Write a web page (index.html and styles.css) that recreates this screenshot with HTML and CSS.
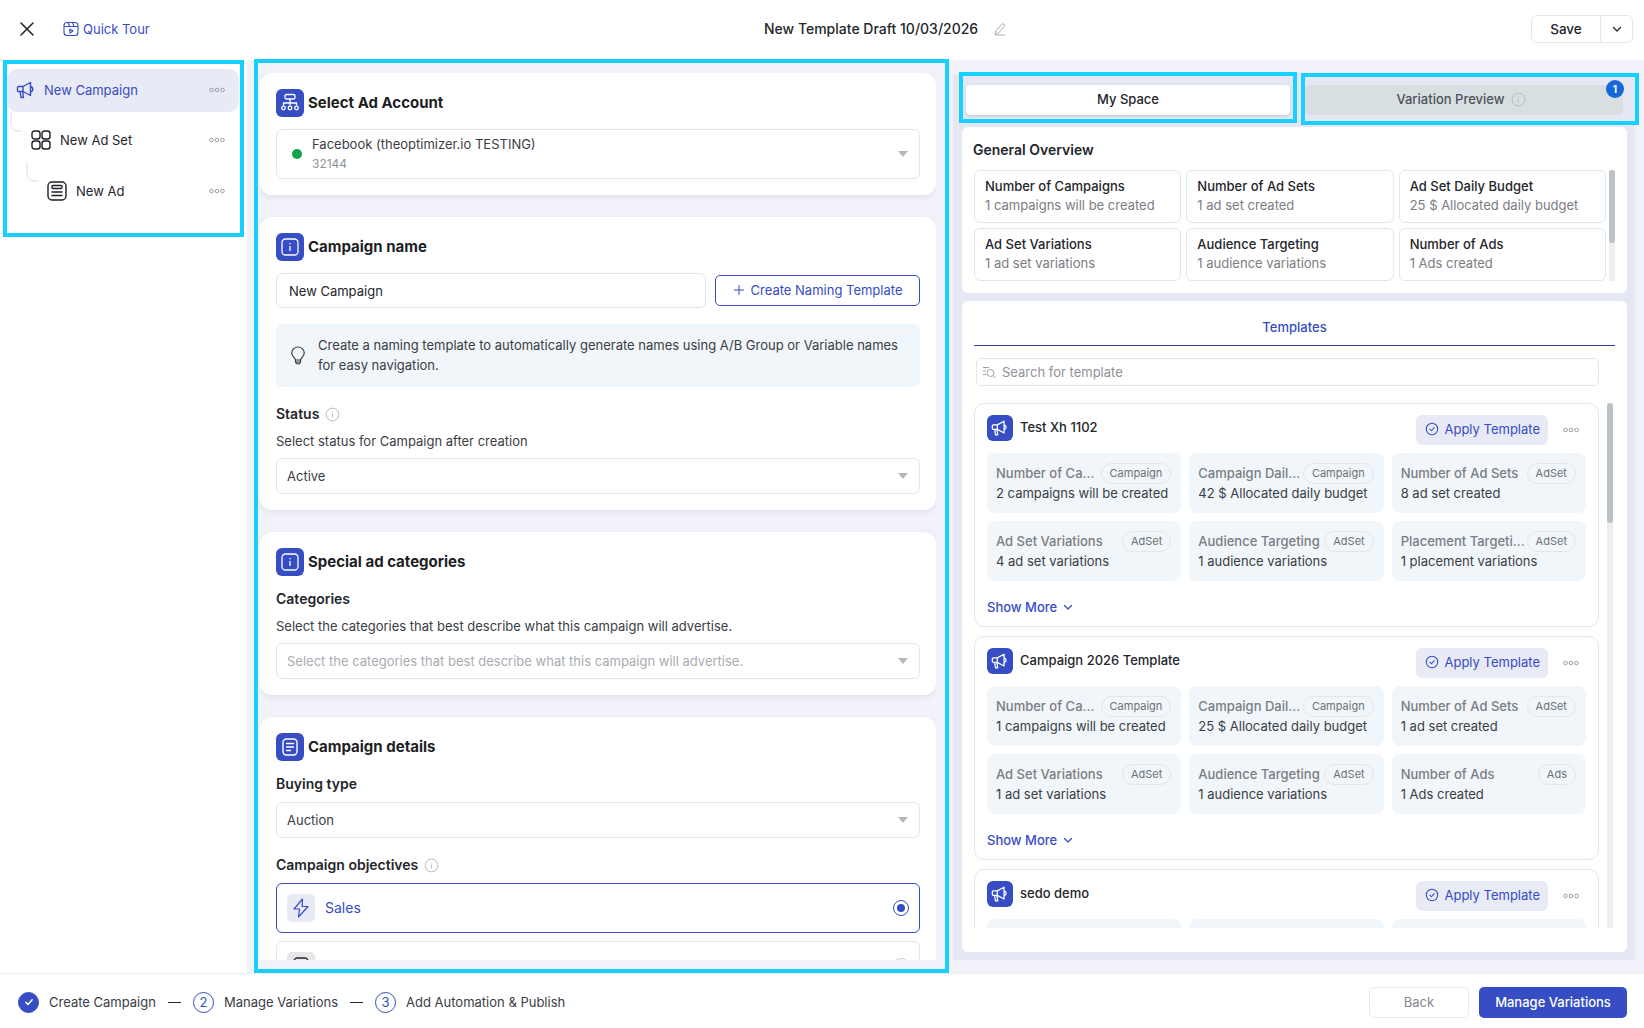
FILE: index.html
```html
<!DOCTYPE html>
<html lang="en">
<head>
<meta charset="utf-8">
<title>New Template Draft</title>
<link rel="stylesheet" href="styles.css">
</head>
<body>
<svg class="defs" width="0" height="0">
	<symbol id="i-mega" viewBox="0 0 20 20"><path d="M2.500 6.500H7L14.500 2.500v13L7 11.500H2.500a1 1 0 0 1-1-1v-3a1 1 0 0 1 1-1zM7 6.500v5M4 11.500l1 6h2.500l-1-6M14.500 6.500a2.800 2.800 0 0 1 0 5.500" fill="none" stroke="currentColor" stroke-width="1.400" stroke-linejoin="round" stroke-linecap="round"/></symbol>
	<symbol id="i-dots" viewBox="0 0 16 6"><g fill="none" stroke="currentColor" stroke-width="1"><circle cx="2.500" cy="3" r="1.800"/><circle cx="8" cy="3" r="1.800"/><circle cx="13.500" cy="3" r="1.800"/></g></symbol>
	<symbol id="i-check" viewBox="0 0 16 16"><circle cx="8" cy="8" r="6.500" fill="none" stroke="currentColor" stroke-width="1.200"/><path d="M5.500 8.200l1.800 1.800 3.200-3.600" fill="none" stroke="currentColor" stroke-width="1.200" stroke-linecap="round" stroke-linejoin="round"/></symbol>
	<symbol id="i-chev" viewBox="0 0 12 12"><path d="M2.500 4.500L6 8l3.500-3.500" fill="none" stroke="currentColor" stroke-width="1.300" stroke-linecap="round" stroke-linejoin="round"/></symbol>
	<symbol id="i-info" viewBox="0 0 16 16"><circle cx="8" cy="8" r="6.800" fill="none" stroke="currentColor"/><path d="M8 7.200v4M8 4.800v.8" stroke="currentColor" fill="none"/></symbol>
	<symbol id="i-infobox" viewBox="0 0 20 20"><rect x="2" y="2" width="16" height="16" rx="3.500" fill="none" stroke="currentColor" stroke-width="1.300"/><path d="M10 9v5M10 6v1.200" stroke="currentColor" stroke-width="1.300" fill="none"/></symbol>
	<symbol id="i-doc" viewBox="0 0 20 20"><rect x="3" y="2" width="14" height="16" rx="3.500" fill="none" stroke="currentColor" stroke-width="1.400"/><path d="M6.500 6.500h7M6.500 10h7M6.500 13.500h4" stroke="currentColor" stroke-width="1.400" stroke-linecap="round" fill="none"/></symbol>
</svg>

<div class="page">
	<header class="topbar">
		<div class="topbar-left">
			<svg class="close-icon" width="16" height="16" viewBox="0 0 16 16"><path d="M2 2l12 12M14 2L2 14" stroke="#1d1f24" stroke-width="1.500" stroke-linecap="round"/></svg>
			<a class="tour">
				<svg width="16" height="16" viewBox="0 0 16 16" fill="none" stroke="currentColor" stroke-width="1.100"><rect x="1" y="1.500" width="14" height="13" rx="3"/><path d="M1 5.500h14M5 1.500l1.500 4M9.500 1.500l1.500 4"/><path d="M6.800 8v4l3.200-2z" stroke-linejoin="round"/></svg>
				Quick Tour
			</a>
		</div>
		<div class="draft-title">
			New Template Draft 10/03/2026
			<svg width="14" height="14" viewBox="0 0 14 14" fill="none" stroke="#a9acb2"><path d="M9.500 1.500l2.500 2-6.500 7.500-3.500 1.500.8-3.500zM2 13h10"/></svg>
		</div>
		<div class="save-group">
			<span class="save-main">Save</span>
			<span class="save-arrow"><svg width="12" height="12"><use href="#i-chev"/></svg></span>
		</div>
	</header>

	<main class="workspace">
		<nav class="tree">
			<div class="tree-row tree-row-active">
				<svg class="tree-icon" width="20" height="20"><use href="#i-mega"/></svg>
				<span class="tree-name">New Campaign</span>
				<svg class="dots" width="16" height="6"><use href="#i-dots"/></svg>
			</div>
			<div class="tree-row tree-row-set">
				<span class="elbow"></span>
				<svg class="tree-icon" width="20" height="20" viewBox="0 0 20 20" fill="none" stroke="#1d1f24" stroke-width="1.400"><rect x="1" y="1" width="8" height="8" rx="2.500"/><rect x="11" y="1" width="8" height="8" rx="2.500"/><rect x="1" y="11" width="8" height="8" rx="2.500"/><rect x="11" y="11" width="8" height="8" rx="2.500"/></svg>
				<span class="tree-name">New Ad Set</span>
				<svg class="dots" width="16" height="6"><use href="#i-dots"/></svg>
			</div>
			<div class="tree-row tree-row-ad">
				<span class="elbow"></span>
				<svg class="tree-icon" width="20" height="20" viewBox="0 0 20 20" fill="none" stroke="#1d1f24" stroke-width="1.400"><rect x="1" y="1" width="18" height="18" rx="4"/><rect x="5" y="4.500" width="10" height="3" rx="1"/><path d="M4.500 11h11M4.500 14.500h11"/></svg>
				<span class="tree-name">New Ad</span>
				<svg class="dots" width="16" height="6"><use href="#i-dots"/></svg>
			</div>
		</nav>

		<section class="form-col">
			<div class="form-scroll">
				<div class="card card-account">
					<h2 class="card-title">
						<span class="title-icon"><svg width="20" height="20" viewBox="0 0 20 20" fill="none" stroke="currentColor" stroke-width="1.300"><rect x="5" y="1.500" width="10" height="4.500" rx="1.500"/><path d="M10 6v6M3.500 12.500v-2.500h13v2.500M10 10v2.500"/><circle cx="3.500" cy="15" r="1.800"/><circle cx="10" cy="15" r="1.800"/><circle cx="16.500" cy="15" r="1.800"/></svg></span>
						Select Ad Account
					</h2>
					<div class="account-select">
						<span class="status-dot"></span>
						<div class="account-text">
							<div class="account-name">Facebook (theoptimizer.io TESTING)</div>
							<div class="account-id">32144</div>
						</div>
						<span class="caret"></span>
					</div>
				</div>

				<div class="card card-name">
					<h2 class="card-title">
						<span class="title-icon"><svg width="20" height="20"><use href="#i-infobox"/></svg></span>
						Campaign name
					</h2>
					<div class="name-row">
						<div class="text-input">New Campaign</div>
						<a class="outline-btn">
							<svg width="12" height="12" viewBox="0 0 12 12"><path d="M6 1v10M1 6h10" stroke="currentColor" fill="none"/></svg>
							Create Naming Template
						</a>
					</div>
					<div class="tip">
						<svg width="16" height="20" viewBox="0 0 16 20" fill="none" stroke="#3a3d44" stroke-width="1.200"><path d="M5.500 14c0-2-3.800-3.500-3.800-7.300A6.300 6.300 0 0 1 8 1a6.300 6.300 0 0 1 6.300 5.700c0 3.800-3.800 5.300-3.800 7.300z"/><path d="M5.500 14v1.500c0 .8 1 2.500 2.500 2.500s2.500-1.700 2.500-2.500V14M6 16h4"/></svg>
						<p>Create a naming template to automatically generate names using A/B Group or Variable names for easy navigation.</p>
					</div>
					<div class="field-label label-status">Status <svg class="info" width="15" height="15"><use href="#i-info"/></svg></div>
					<div class="field-hint">Select status for Campaign after creation</div>
					<div class="select">Active<span class="caret"></span></div>
				</div>

				<div class="card card-special">
					<h2 class="card-title">
						<span class="title-icon"><svg width="20" height="20"><use href="#i-infobox"/></svg></span>
						Special ad categories
					</h2>
					<div class="field-label label-cat">Categories</div>
					<div class="field-hint">Select the categories that best describe what this campaign will advertise.</div>
					<div class="select select-empty">Select the categories that best describe what this campaign will advertise.<span class="caret"></span></div>
				</div>

				<div class="card card-details">
					<h2 class="card-title">
						<span class="title-icon"><svg width="20" height="20"><use href="#i-doc"/></svg></span>
						Campaign details
					</h2>
					<div class="field-label label-buying">Buying type</div>
					<div class="select select-buying">Auction<span class="caret"></span></div>
					<div class="field-label label-obj">Campaign objectives <svg class="info" width="15" height="15"><use href="#i-info"/></svg></div>
					<div class="objective objective-on">
						<span class="obj-icon"><svg width="18" height="20" viewBox="0 0 18 20" fill="none" stroke="currentColor" stroke-width="1.200" stroke-linejoin="round"><path d="M10.500 1L2 11h5.500L6.500 19 16 8.500h-5.800z"/></svg></span>
						<span class="obj-name">Sales</span>
						<span class="radio"></span>
					</div>
					<div class="objective">
						<span class="obj-icon obj-icon-off"><svg width="20" height="20"><use href="#i-doc"/></svg></span>
						<span class="radio radio-off"></span>
					</div>
				</div>
			</div>
		</section>

		<aside class="side-panel">
			<div class="tabs">
				<div class="tab tab-on">My Space</div>
				<div class="tab tab-off">Variation Preview <svg class="info" width="15" height="15"><use href="#i-info"/></svg><span class="badge">1</span></div>
			</div>

			<div class="panel-card overview">
				<h3 class="overview-title">General Overview</h3>
				<div class="overview-body">
					<div class="overview-grid">
						<div class="stat"><b>Number of Campaigns</b><span>1 campaigns will be created</span></div>
						<div class="stat"><b>Number of Ad Sets</b><span>1 ad set created</span></div>
						<div class="stat"><b>Ad Set Daily Budget</b><span>25 $ Allocated daily budget</span></div>
						<div class="stat"><b>Ad Set Variations</b><span>1 ad set variations</span></div>
						<div class="stat"><b>Audience Targeting</b><span>1 audience variations</span></div>
						<div class="stat"><b>Number of Ads</b><span>1 Ads created</span></div>
					</div>
					<div class="scroll-track"><div class="scroll-thumb thumb-overview"></div></div>
				</div>
			</div>

			<div class="panel-card templates">
				<div class="templates-tab">Templates</div>
				<div class="search">
					<svg width="15" height="15" viewBox="0 0 15 15" fill="none" stroke="#a0a3a9"><path d="M1 2.500h6M1 6h3M1 9.500h3"/><circle cx="8.500" cy="8" r="3.500"/><path d="M11 10.500l2.500 2.500"/></svg>
					Search for template
				</div>
				<div class="list-wrap">
					<div class="template-list">
						<div class="template">
							<div class="template-head">
								<span class="tpl-icon"><svg width="18" height="18"><use href="#i-mega"/></svg></span>
								<span class="tpl-name">Test Xh 1102</span>
								<a class="apply"><svg width="14" height="14"><use href="#i-check"/></svg>Apply Template</a>
								<svg class="dots" width="16" height="6"><use href="#i-dots"/></svg>
							</div>
							<div class="mini-grid">
								<div class="mini"><div class="mini-top"><b>Number of Ca...</b><span class="pill">Campaign</span></div><div class="mini-val">2 campaigns will be created</div></div>
								<div class="mini"><div class="mini-top"><b>Campaign Dail...</b><span class="pill">Campaign</span></div><div class="mini-val">42 $ Allocated daily budget</div></div>
								<div class="mini"><div class="mini-top"><b>Number of Ad Sets</b><span class="pill">AdSet</span></div><div class="mini-val">8 ad set created</div></div>
								<div class="mini"><div class="mini-top"><b>Ad Set Variations</b><span class="pill">AdSet</span></div><div class="mini-val">4 ad set variations</div></div>
								<div class="mini"><div class="mini-top"><b>Audience Targeting</b><span class="pill">AdSet</span></div><div class="mini-val">1 audience variations</div></div>
								<div class="mini"><div class="mini-top"><b>Placement Targeti...</b><span class="pill">AdSet</span></div><div class="mini-val">1 placement variations</div></div>
							</div>
							<a class="show-more">Show More <svg width="12" height="12"><use href="#i-chev"/></svg></a>
						</div>

						<div class="template">
							<div class="template-head">
								<span class="tpl-icon"><svg width="18" height="18"><use href="#i-mega"/></svg></span>
								<span class="tpl-name">Campaign 2026 Template</span>
								<a class="apply"><svg width="14" height="14"><use href="#i-check"/></svg>Apply Template</a>
								<svg class="dots" width="16" height="6"><use href="#i-dots"/></svg>
							</div>
							<div class="mini-grid">
								<div class="mini"><div class="mini-top"><b>Number of Ca...</b><span class="pill">Campaign</span></div><div class="mini-val">1 campaigns will be created</div></div>
								<div class="mini"><div class="mini-top"><b>Campaign Dail...</b><span class="pill">Campaign</span></div><div class="mini-val">25 $ Allocated daily budget</div></div>
								<div class="mini"><div class="mini-top"><b>Number of Ad Sets</b><span class="pill">AdSet</span></div><div class="mini-val">1 ad set created</div></div>
								<div class="mini"><div class="mini-top"><b>Ad Set Variations</b><span class="pill">AdSet</span></div><div class="mini-val">1 ad set variations</div></div>
								<div class="mini"><div class="mini-top"><b>Audience Targeting</b><span class="pill">AdSet</span></div><div class="mini-val">1 audience variations</div></div>
								<div class="mini"><div class="mini-top"><b>Number of Ads</b><span class="pill">Ads</span></div><div class="mini-val">1 Ads created</div></div>
							</div>
							<a class="show-more">Show More <svg width="12" height="12"><use href="#i-chev"/></svg></a>
						</div>

						<div class="template">
							<div class="template-head">
								<span class="tpl-icon"><svg width="18" height="18"><use href="#i-mega"/></svg></span>
								<span class="tpl-name">sedo demo</span>
								<a class="apply"><svg width="14" height="14"><use href="#i-check"/></svg>Apply Template</a>
								<svg class="dots" width="16" height="6"><use href="#i-dots"/></svg>
							</div>
							<div class="mini-grid">
								<div class="mini"></div>
								<div class="mini"></div>
								<div class="mini"></div>
							</div>
						</div>
					</div>
					<div class="scroll-track"><div class="scroll-thumb thumb-list"></div></div>
				</div>
			</div>
		</aside>
	</main>

	<footer class="bottombar">
		<div class="steps">
			<span class="step-num step-done"><svg width="12" height="12" viewBox="0 0 12 12"><path d="M2.800 6.200l2.200 2.200 4.200-4.600" fill="none" stroke="#fff" stroke-width="1.500" stroke-linecap="round" stroke-linejoin="round"/></svg></span>
			<span class="step-name">Create Campaign</span>
			<span class="step-dash"></span>
			<span class="step-num">2</span>
			<span class="step-name">Manage Variations</span>
			<span class="step-dash"></span>
			<span class="step-num">3</span>
			<span class="step-name">Add Automation &amp; Publish</span>
		</div>
		<div class="bottom-actions">
			<a class="btn-back">Back</a>
			<a class="btn-next">Manage Variations</a>
		</div>
	</footer>

	<div class="mark mark-tree"></div>
	<div class="mark mark-form"></div>
	<div class="mark mark-space"></div>
	<div class="mark mark-preview"></div>
</div>
</body>
</html>
```

FILE: styles.css
```css
* { box-sizing: border-box; }
html, body { margin: 0; height: 100%; overflow: hidden; }
body { font: 13px/20px Inter, "Noto Sans", sans-serif; color: #24262b; background: #fff; }
a { color: inherit; text-decoration: none; }
h2, h3, p { margin: 0; }
.defs { position: absolute; }

.page { position: relative; display: flex; flex-direction: column; height: 100vh; }

/* top bar */
.topbar { display: flex; align-items: center; justify-content: space-between; flex: 0 0 60px; padding: 0 11px 2px 19px; background: #fff; position: relative; }
.topbar-left { display: flex; align-items: center; gap: 28px; }
.tour { display: flex; align-items: center; gap: 4px; color: #364dc3; }
.draft-title { position: absolute; left: 764px; top: 19px; display: flex; align-items: center; gap: 15px; font-size: 14px; font-weight: 500; }
.save-group { display: flex; height: 28px; border: 1px solid #e4e5e9; border-radius: 6px; font-size: 13.500px; font-weight: 500; }
.save-main { display: flex; align-items: center; justify-content: center; width: 69px; border-right: 1px solid #e4e5e9; }
.save-arrow { display: flex; align-items: center; justify-content: center; width: 31px; }

/* layout */
.workspace { flex: 1; display: flex; min-height: 0; background: #f1f2fa; }

/* campaign tree */
.tree { flex: 0 0 247px; padding: 9px 8px 0 7px; background: #fff; }
.tree-row { display: flex; align-items: center; position: relative; height: 43px; padding-right: 14px; margin-bottom: 6px; border-radius: 10px; }
.tree-row-active { padding-left: 9px; padding-bottom: 2px; background: #e8eaf6; color: #364dc3; }
.tree-row-active .tree-name { margin-left: 8px; }
.tree-row-set { padding-left: 24px; margin-bottom: 8px; }
.tree-row-ad { padding-left: 40px; }
.tree-name { flex: 1; margin-left: 9px; }
.tree-row .dots { color: #9a9da3; }
.elbow { position: absolute; width: 12px; height: 20px; top: -6px; left: 3px; border-left: 2px solid #eceef8; border-bottom: 2px solid #eceef8; border-bottom-left-radius: 8px; }
.tree-row-ad .elbow { left: 19px; top: -7px; }

/* middle form column */
.form-col { flex: 0 0 706px; padding: 13px 17px 13px 13px; }
.form-scroll { display: flex; flex-direction: column; gap: 22px; height: 100%; overflow: hidden; }
.card { flex-shrink: 0; padding: 16px; background: #fff; border-radius: 12px; box-shadow: 0 2px 6px rgba(40, 44, 80, .08); }
.card-title { display: flex; align-items: center; gap: 4px; height: 28px; font-size: 15px; font-weight: 700; color: #1d1f24; }
.title-icon { display: flex; align-items: center; justify-content: center; width: 28px; height: 28px; border-radius: 6px; background: #364dc3; color: #fff; }
.account-select { display: flex; align-items: center; height: 50px; margin-top: 12px; padding: 0 11px 0 15px; border: 1px solid #e4e5e9; border-radius: 6px; }
.status-dot { width: 10px; height: 10px; border-radius: 50%; background: #0ea44c; margin-right: 10px; }
.account-text { flex: 1; margin-top: -1px; }
.account-name { color: #3a3d44; }
.account-id { font-size: 12px; color: #8f9298; }
.caret { margin-left: auto; width: 0; height: 0; border-left: 5px solid transparent; border-right: 5px solid transparent; border-top: 6px solid #b5b8bd; }
.name-row { display: flex; gap: 9px; align-items: center; margin-top: 12px; }
.text-input { flex: 1; height: 35px; padding: 7px 12px; border: 1px solid #e4e5e9; border-radius: 6px; }
.outline-btn { display: flex; align-items: center; justify-content: center; gap: 6px; flex: 0 0 205px; height: 31px; padding-bottom: 2px; border: 1px solid #364dc3; border-radius: 5px; color: #364dc3; }
.tip { display: flex; align-items: center; gap: 12px; height: 63px; margin-top: 16px; padding: 0 16px 0 14px; border-radius: 6px; background: #f0f6fa; color: #3a3d44; }
.tip svg { flex-shrink: 0; }
.tip p { margin-top: -2px; }
.field-label { display: flex; align-items: center; gap: 6px; font-size: 14px; font-weight: 600; color: #24262b; }
.label-status { margin-top: 17px; }
.label-cat { margin-top: 13px; }
.label-buying { margin-top: 13px; }
.label-obj { margin-top: 17px; }
.info { color: #b5b8bd; }
.field-hint { margin-top: 7px; color: #3a3d44; }
.select { display: flex; align-items: center; height: 36px; margin-top: 7px; padding: 0 11px 0 10px; border: 1px solid #e4e5e9; border-radius: 6px; color: #3a3d44; }
.select-empty { color: #a9acb2; }
.select-buying { margin-top: 8px; }
.objective { display: flex; align-items: center; height: 50px; margin-top: 8px; padding: 0 10px; border: 1px solid #e4e5e9; border-radius: 6px; font-size: 14px; }
.objective-on { border-color: #364dc3; color: #364dc3; }
.obj-icon { display: flex; align-items: center; justify-content: center; width: 28px; height: 28px; border-radius: 5px; background: #e8eaf6; }
.obj-icon-off { background: #e6e7e9; color: #24262b; }
.obj-name { margin-left: 10px; }
.radio { position: relative; margin-left: auto; width: 16px; height: 16px; border: 1.500px solid #364dc3; border-radius: 50%; }
.radio::after { content: ""; position: absolute; inset: 3px; border-radius: 50%; background: #364dc3; }
.radio-off { border-color: #c9cbd0; }
.radio-off::after { display: none; }
.card-details { padding-bottom: 30px; }

/* right panel */
.side-panel { display: flex; flex-direction: column; gap: 8px; flex: 0 0 682px; min-width: 0; margin: 13px 0; padding: 12px 8px 8px 9px; background: #e6e7f4; border-radius: 6px 6px 0 0; }
.tabs { display: flex; gap: 15px; padding: 0 4px; height: 30px; margin-bottom: 4px; }
.tab { position: relative; display: flex; align-items: center; justify-content: center; gap: 6px; padding-bottom: 2px; border-radius: 4px; font-weight: 500; }
.tab-on { flex: 0 0 324px; background: #fff; box-shadow: 0 1px 3px rgba(0, 0, 0, .15); }
.tab-off { flex: 0 0 318px; padding-right: 6px; background: #d8dfe3; color: #4e5258; }
.badge { position: absolute; top: -5px; right: -1px; width: 18px; height: 18px; border-radius: 50%; background: #1668d8; color: #fff; font-size: 10px; font-weight: 700; line-height: 18px; text-align: center; }
.panel-card { background: #fff; border-radius: 6px; min-width: 0; }
.overview { flex: 0 0 166px; padding: 13px 12px 0; }
.overview-title { margin-left: -1px; font-size: 14px; font-weight: 600; line-height: 20px; color: #24262b; }
.overview-body { display: flex; gap: 3px; margin-top: 10px; }
.overview-grid { display: grid; flex: 0 0 632px; grid-template-columns: repeat(3, minmax(0, 1fr)); grid-auto-rows: 53px; gap: 5px; }
.stat { display: flex; flex-direction: column; justify-content: center; padding: 0 10px 2px; border: 1px solid #e4e5e9; border-radius: 6px; line-height: 19px; }
.stat b { font-weight: 500; color: #24262b; }
.stat span { color: #7a7d84; }
.scroll-track { flex: 0 0 6px; background: #eceef1; }
.scroll-thumb { width: 6px; border-radius: 3px; background: #bcc1c6; }
.thumb-overview { height: 73px; }
.thumb-list { height: 120px; }

.templates { flex: 1; min-height: 0; display: flex; flex-direction: column; padding: 0 12px; }
.templates-tab { flex: 0 0 45px; padding-top: 16px; border-bottom: 1px solid #2f3f9e; text-align: center; font-weight: 500; color: #364dc3; }
.search { display: flex; align-items: center; gap: 5px; flex: 0 0 28px; width: 623px; margin: 12px 0 17px 2px; padding: 0 5px; border: 1px solid #e4e5e9; border-radius: 5px; color: #8f9298; }
.list-wrap { display: flex; justify-content: space-between; height: 525px; overflow: hidden; margin-right: 2px; }
.template-list { display: flex; flex-direction: column; gap: 9px; flex: 0 0 625px; min-width: 0; }
.template { flex: 0 0 224px; min-width: 0; padding: 11px 12px 0; border: 1px solid #e4e5e9; border-radius: 10px; }
.template-head { display: flex; height: 30px; align-items: flex-start; }
.tpl-icon { display: flex; align-items: center; justify-content: center; width: 26px; height: 26px; border-radius: 6px; background: #364dc3; color: #fff; }
.tpl-name { flex: 1; margin-left: 7px; margin-top: 2px; font-weight: 500; }
.apply { display: flex; align-items: center; gap: 5px; height: 30px; padding: 0 8px 2px 9px; border-radius: 6px; background: #e8eaf6; color: #364dc3; }
.template-head .dots { margin: 12px 7px 0 15px; color: #9a9da3; }
.mini-grid { display: grid; grid-template-columns: repeat(3, minmax(0, 1fr)); grid-auto-rows: 60px; gap: 8px; margin-top: 8px; }
.mini { padding: 9px 10px 0 9px; border-radius: 8px; background: #f0f6fa; min-width: 0; }
.mini-top { display: flex; align-items: center; justify-content: space-between; gap: 2px; height: 22px; }
.mini-top b { white-space: nowrap; font-weight: 500; color: #7a7d84; }
.pill { flex-shrink: 0; height: 21px; padding: 0 8px; border: 1px solid #e4e5e9; border-radius: 11px; font-size: 11px; line-height: 19px; color: #6e7177; }
.mini-val { margin-top: -1px; color: #3a3d44; }
.show-more { display: inline-flex; align-items: center; gap: 5px; margin-top: 16px; font-weight: 500; color: #364dc3; }

/* bottom bar */
.bottombar { display: flex; align-items: center; justify-content: space-between; flex: 0 0 55px; padding: 2px 17px 0 18px; background: #fff; border-top: 1px solid #eceef1; }
.steps { display: flex; align-items: center; }
.step-num { display: flex; align-items: center; justify-content: center; width: 21px; height: 21px; border: 1px solid #364dc3; border-radius: 50%; color: #364dc3; }
.step-done { background: #364dc3; }
.step-name { margin-left: 10px; color: #3a3d44; }
.step-dash { width: 13px; height: 1px; margin: 0 12px; background: #24262b; }
.bottom-actions { display: flex; gap: 10px; }
.btn-back, .btn-next { display: flex; align-items: center; justify-content: center; height: 31px; border-radius: 5px; }
.btn-back { width: 100px; border: 1px solid #e9eaed; color: #85888e; }
.btn-next { width: 148px; background: #364dc3; color: #fff; font-weight: 500; }

/* highlight frames laid over the screen */
.mark { position: absolute; border: 4px solid #18d0ff; pointer-events: none; }
.mark-tree { left: 3px; top: 60px; width: 241px; height: 177px; }
.mark-form { left: 254px; top: 59px; width: 695px; height: 914px; }
.mark-space { left: 959px; top: 72px; width: 338px; height: 51px; }
.mark-preview { left: 1301px; top: 73px; width: 338px; height: 52px; }
```
